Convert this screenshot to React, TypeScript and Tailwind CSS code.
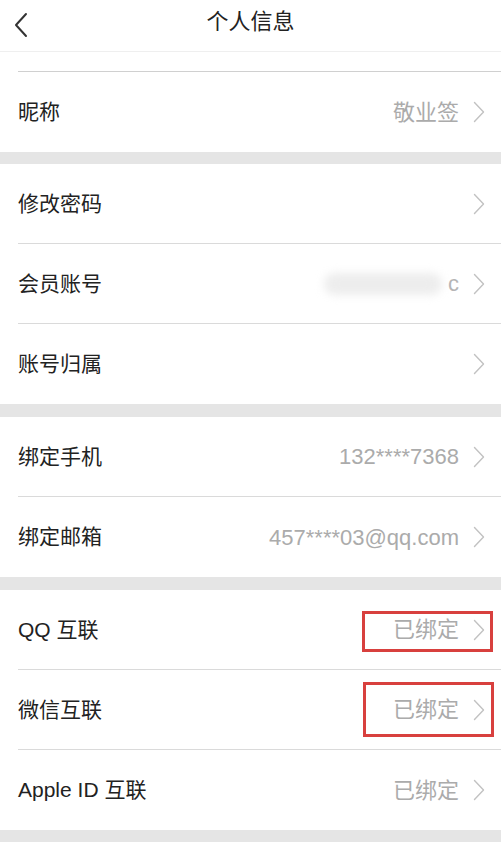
import React from "react";

const font = { fontFamily: '"Liberation Sans", "Noto Sans CJK SC", sans-serif' };

const Chevron: React.FC = () => (
  <svg width="12" height="22" viewBox="0 0 12 22" fill="none" className="shrink-0">
    <path d="M1.5 1.5 L10.5 11 L1.5 20.5" stroke="#c2c2c2" strokeWidth="1.4" strokeLinecap="round" strokeLinejoin="round" />
  </svg>
);

type RowProps = {
  label: string;
  value?: React.ReactNode;
  last?: boolean;
  mark?: "qq" | "wx";
};

const Row: React.FC<RowProps> = ({ label, value, last, mark }) => (
  <div className="relative h-[80px] bg-white pl-[18px]">
    <div
      className={
        "flex h-full items-center justify-between pr-[16px] " +
        (last ? "" : "border-b border-[#dadada]")
      }
    >
      <span className="text-[21px] text-[#222]">{label}</span>
      <div className="flex items-center gap-[14px]">
        {value && <span className="text-[22px] text-[#ababab]">{value}</span>}
        <Chevron />
      </div>
    </div>
    {/* red highlight frames */}
    {mark === "qq" && (
      <div className="absolute right-[8px] top-[21px] h-[41px] w-[131px] border-[3px] border-[#d8403e]" />
    )}
    {mark === "wx" && (
      <div className="absolute right-[7px] top-[12px] h-[55px] w-[131px] border-[3px] border-[#d8403e]" />
    )}
  </div>
);

const Gap: React.FC<{ h: string }> = ({ h }) => <div className={h + " bg-[#e5e5e5]"} />;

const App: React.FC = () => {
  return (
    <div className="h-[842px] w-[501px] overflow-hidden bg-[#e5e5e5]" style={font}>
      {/* Header */}
      <header className="relative flex h-[52px] items-center justify-center border-b border-[#efefef] bg-white">
        <button className="absolute left-[13px] top-[12px]">
          <svg width="16" height="26" viewBox="0 0 16 26" fill="none">
            <path d="M13 2 L3 13 L13 24" stroke="#333" strokeWidth="2" strokeLinecap="round" strokeLinejoin="round" />
          </svg>
        </button>
        <h1 className="-mt-[8px] text-[22px] text-[#222]">个人信息</h1>
      </header>

      {/* cut-off row */}
      <div className="h-[20px] bg-white pl-[18px]">
        <div className="h-full border-b border-[#d0d0d0]" />
      </div>

      <Row label="昵称" value="敬业签" last />
      <Gap h="h-[12px]" />

      <Row label="修改密码" />
      <Row
        label="会员账号"
        value={
          <span className="flex items-center">
            <span className="mr-[6px] h-[22px] w-[118px] rounded-full bg-[#ededed] blur-[4px]" />
            <span className="text-[#b5b5b5]">c</span>
          </span>
        }
      />
      <Row label="账号归属" last />
      <Gap h="h-[13px]" />

      <Row label="绑定手机" value="132****7368" />
      <Row label="绑定邮箱" value="457****03@qq.com" last />
      <Gap h="h-[13px]" />

      <Row label="QQ 互联" value="已绑定" mark="qq" />
      <Row label="微信互联" value="已绑定" mark="wx" />
      <Row label="Apple ID 互联" value="已绑定" last />
    </div>
  );
};

export default App;
